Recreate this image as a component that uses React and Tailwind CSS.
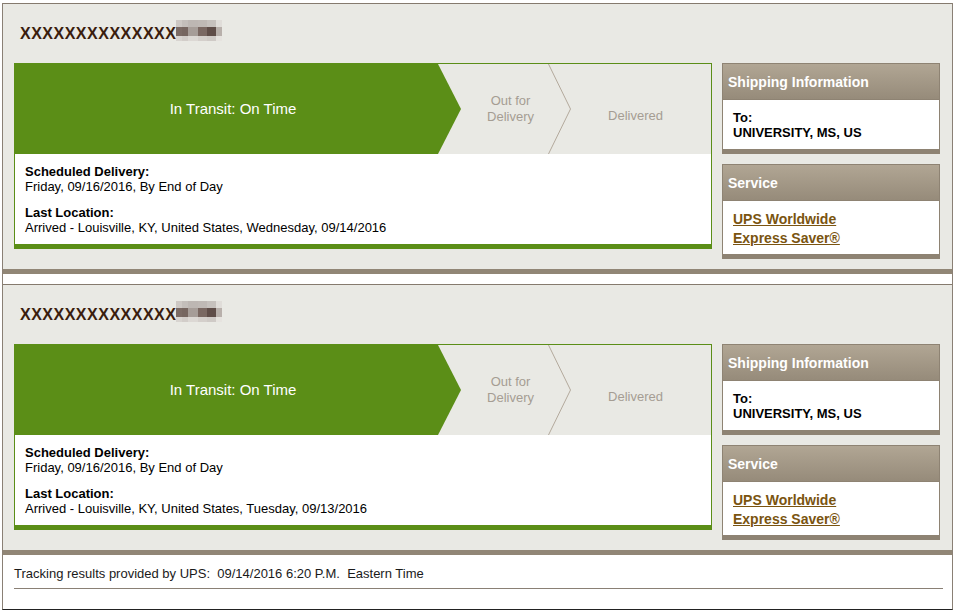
import React from "react";

const font = "font-['Liberation_Sans',Arial,sans-serif]";

const BlurredDigits = () => {
  const cols = [6, 6, 10, 9, 9, 6];
  const rows = [7, 9, 5];
  const colors = [
    ["#cdc8c4", "#c3beba", "#bdb7b3", "#bfb9b5", "#c6c1bd", "#e0ddd9"],
    ["#7a6a64", "#766660", "#a69d98", "#7a6862", "#5f4d48", "#b8b0ab"],
    ["#d8d4d0", "#d2cdc9", "#dcd8d4", "#d4cfcb", "#cfcac6", "#e6e3df"],
  ];
  let y = 0;
  const rects = [];
  rows.forEach((h, r) => {
    let x = 0;
    cols.forEach((w, c) => {
      rects.push(<rect key={`${r}-${c}`} x={x} y={y} width={w} height={h} fill={colors[r][c]} />);
      x += w;
    });
    y += h;
  });
  return (
    <svg width="46" height="21" viewBox="0 0 46 21" className="mb-[6px] block">
      {rects}
    </svg>
  );
};

const SideBox = ({ title, children, bodyClass }) => (
  <div>
    <div className="flex h-[37px] items-center border border-[#8e8373] bg-gradient-to-b from-[#b1a694] to-[#968b7a] pl-[5px] pt-[1px] text-[14px] font-bold text-white">
      {title}
    </div>
    <div className={`border-x border-b-[5px] border-[#8e8373] bg-white ${bodyClass}`}>{children}</div>
  </div>
);

const Shipment = ({ lastLocation }) => (
  <div className="border-t border-b-[5px] border-t-[#857a6e] border-b-[#918676] bg-[#e9e9e4] pb-[10px]">
    <div className="flex h-[59px] items-center pl-[17px]">
      <span className="text-[16px] font-bold tracking-[0.5px] text-[#3a1d0e]">XXXXXXXXXXXXXX</span>
      <BlurredDigits />
    </div>
    <div className="flex items-start gap-[10px] pl-[11px] pr-[12px]">
      <div className="flex-1 border-x border-t border-b-[5px] border-[#5b8e17] bg-white">
        <div className="flex h-[90px] bg-[#e9e9e4]">
          <div
            className="flex w-[446px] items-center justify-center bg-[#5b8e17] pr-[10px] text-[15px] text-white"
            style={{ clipPath: "polygon(0 0, 423px 0, 446px 50%, 423px 100%, 0 100%)" }}
          >
            In Transit: On Time
          </div>
          <div className="flex w-[87px] items-center justify-center pl-[12px] text-center text-[13px] leading-[16px] text-[#a59d93]">
            Out for
            <br />
            Delivery
          </div>
          <svg width="23" height="90" viewBox="0 0 23 90" className="block shrink-0">
            <polyline points="0,-1 22.5,45 0,91" fill="none" stroke="#b3a99c" strokeWidth="1" />
          </svg>
          <div className="flex flex-1 items-center justify-center pr-[11px] pt-[14px] text-[13px] text-[#a59d93]">Delivered</div>
        </div>
        <div className="pb-[9px] pl-[10px] pt-[10px] text-[13px] leading-[15px] text-black">
          <div className="font-bold">Scheduled Delivery:</div>
          <div>Friday, 09/16/2016, By End of Day</div>
          <div className="mt-[11px] font-bold">Last Location:</div>
          <div>{lastLocation}</div>
        </div>
      </div>
      <div className="flex w-[218px] flex-col gap-[10px]">
        <SideBox title="Shipping Information" bodyClass="pl-[10px] pt-[10px] pb-[9px] text-[13px] leading-[15px] font-bold text-black">
          <div>To:</div>
          <div>UNIVERSITY, MS, US</div>
        </SideBox>
        <SideBox title="Service" bodyClass="pl-[10px] pt-[9px] pb-[6px] text-[14px] leading-[19px] font-bold">
          <a href="#" className="text-[#7a5410] underline">
            UPS Worldwide
            <br />
            Express Saver®
          </a>
        </SideBox>
      </div>
    </div>
  </div>
);

export default function App() {
  return (
    <div className={`${font} min-h-[613px] bg-white pt-[3px]`}>
      <div className="ml-[2px] w-[951px] border-x border-b border-x-[#8a8075] border-b-[#222]">
        <Shipment lastLocation="Arrived - Louisville, KY, United States, Wednesday, 09/14/2016" />
        <div className="h-[10px] bg-white" />
        <Shipment lastLocation="Arrived - Louisville, KY, United States, Tuesday, 09/13/2016" />
        <div className="bg-white pl-[11px] pr-[9px] pt-[11px] pb-[20px]">
          <div className="whitespace-pre border-b border-[#8a8075] pb-[7px] text-[13px] leading-[15px] text-[#1a1a1a]">
            {"Tracking results provided by UPS:  09/14/2016 6:20 P.M.  Eastern Time"}
          </div>
        </div>
      </div>
    </div>
  );
}
